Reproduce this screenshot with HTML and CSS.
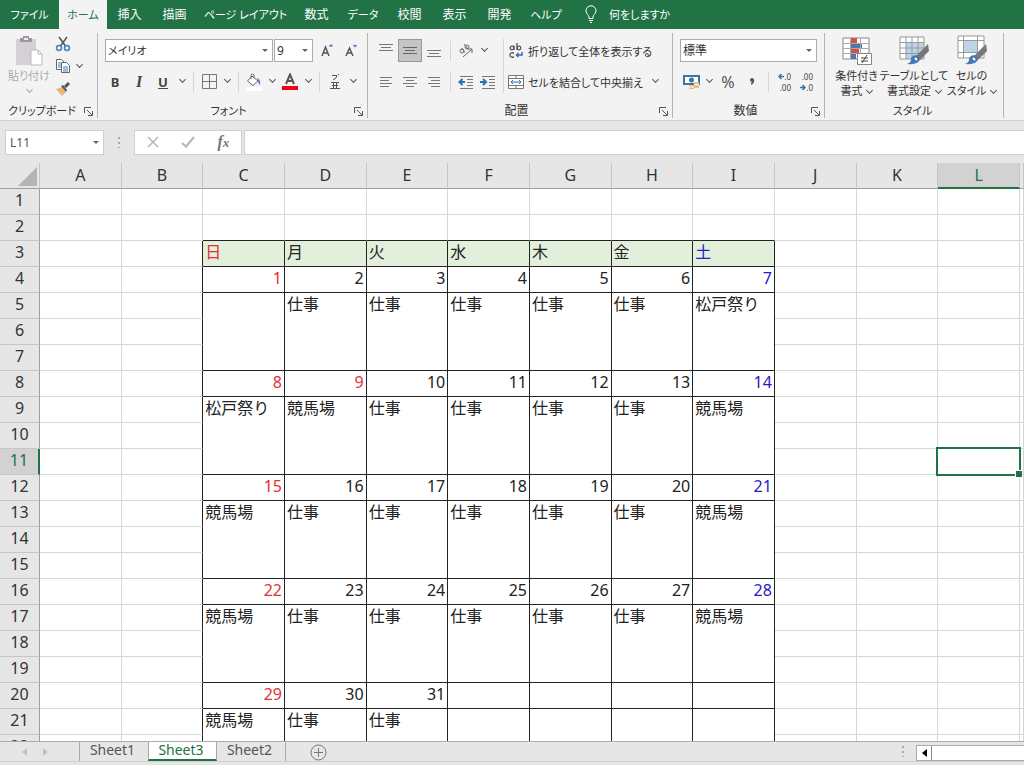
FILE: index.html
```html
<!DOCTYPE html>
<html lang="ja">
<head>
    <meta charset="UTF-8">
    <meta name="viewport" content="width=device-width, initial-scale=1.0">
    <title>Sheet3</title>
    <link rel="stylesheet" href="styles.css">
</head>
<body>

    <nav class="tabs">
        <button class="tab kana file-tab">ファイル</button>
        <button class="tab kana active">ホーム</button>
        <button class="tab">挿入</button>
        <button class="tab">描画</button>
        <button class="tab kana wide-tab">ページ レイアウト</button>
        <button class="tab">数式</button>
        <button class="tab kana kana-tab">データ</button>
        <button class="tab">校閲</button>
        <button class="tab">表示</button>
        <button class="tab">開発</button>
        <button class="tab kana kana-tab">ヘルプ</button>
        <button class="tell-me kana">
            <svg width="12" height="18" viewBox="0 0 12 18" fill="none" stroke="#fff"><path d="M4 13.500V12C4 10 1 9 1 5.800A5 5 0 0 1 11 5.800C11 9 8 10 8 12V13.500ZM4 15.500H8M5 17.500H7"/></svg>
            <span>何をしますか</span>
        </button>
    </nav>

    <div class="ribbon">
        <section class="group clipboard">
            <div class="group-body">
                <button class="big paste">
                    <svg width="28" height="32" viewBox="0 0 28 32"><path d="M1 4H21V30H1Z" fill="#d5d0d5"/><path d="M5 3H8V1H14V3H17V7H5Z" fill="#9b999b"/><path d="M9 3H13V5H9Z" fill="#eee"/><path d="M16 15H23L27 19V30H16Z" fill="#fff" stroke="#bbb"/><path d="M23 15V19H27" fill="none" stroke="#bbb"/></svg>
                    <span>貼り付け</span>
                    <i class="chev"></i>
                </button>
                <div class="clip-tools">
                    <button class="tool" aria-label="切り取り"><svg width="16" height="16" viewBox="0 0 16 16" fill="none" stroke-width="1.500"><path d="M4 1L10.500 10M12 1L5.500 10" stroke="#555"/><circle cx="4" cy="12" r="2.500" stroke="#4a7ebb"/><circle cx="12" cy="12" r="2.500" stroke="#4a7ebb"/></svg></button>
                    <div class="pair">
                        <button class="tool" aria-label="コピー"><svg width="16" height="16" viewBox="0 0 16 16" fill="#fff" stroke="#666"><path d="M1.500 1.500H6.500L9.500 4.500V11.500H1.500Z"/><path d="M6.500 4.500H11.500L14.500 7.500V14.500H6.500Z"/><path d="M3 5H6M3 7H6M3 9H6M8 9H13M8 11H13M8 13H13" stroke="#4a7ebb"/></svg></button>
                        <button class="drop" aria-label="コピーの種類"><i class="chev"></i></button>
                    </div>
                    <button class="tool" aria-label="書式のコピー"><svg width="16" height="16" viewBox="0 0 16 16"><path d="M1 8L7 6L11 11L7 15Z" fill="#e9b872"/><path d="M6 5L8 4L12 9L11 11Z" fill="#555"/><path d="M10 6L14 2" stroke="#555" stroke-width="3"/></svg></button>
                </div>
            </div>
            <div class="group-label"><span>クリップボード</span><button class="launcher" aria-label="クリップボードの設定"><svg width="9" height="9" viewBox="0 0 9 9" fill="none" stroke="#555"><path d="M.5 6V.5H7M3 3L8 8M8.500 4V8.500H4"/></svg></button></div>
        </section>

        <section class="group font">
            <div class="group-body rows">
                <div class="row">
                    <label class="combo font-name"><select aria-label="フォント"><option>メイリオ</option></select></label>
                    <label class="combo font-size"><select aria-label="サイズ"><option>9</option></select></label>
                    <button class="tool mid" aria-label="拡大"><svg width="14" height="16" viewBox="0 0 14 16" fill="none" stroke="#555" stroke-width="1.500"><path d="M2 13L5.500 4L9 13M3.500 10H7.500"/><path d="M9.500 3.500L11 2L12.500 3.500" stroke="#4a7ebb"/></svg></button>
                    <button class="tool mid" aria-label="縮小"><svg width="14" height="16" viewBox="0 0 14 16" fill="none" stroke="#555" stroke-width="1.500"><path d="M2 13L5.500 5L9 13M3.500 10H7.500"/><path d="M9.500 2L11 3.500L12.500 2" stroke="#4a7ebb"/></svg></button>
                </div>
                <div class="row">
                    <button class="tool mid"><b>B</b></button>
                    <button class="tool mid"><em>I</em></button>
                    <button class="tool mid"><u>U</u></button>
                    <button class="drop" aria-label="下線"><i class="chev"></i></button>
                    <i class="sep"></i>
                    <button class="tool" aria-label="罫線"><svg width="15" height="15" viewBox="0 0 15 15" fill="none" stroke="#777"><path d="M.5 .5H14.500V14.500H.5ZM7.500 0V15M0 7.500H15"/></svg></button>
                    <button class="drop" aria-label="罫線の種類"><i class="chev"></i></button>
                    <i class="sep"></i>
                    <button class="tool" aria-label="塗りつぶし"><svg width="16" height="18" viewBox="0 0 16 18" fill="none"><path d="M0 14H16V18H0Z" fill="#fff"/><path d="M6 3L12 8L7 12.500L1.500 8ZM5 6V2Q6.500 0 8 2V5" stroke="#666" fill="#fff"/><path d="M11 5Q15 6 14 12Q12 10 12 7Z" fill="#4a7ebb"/></svg></button>
                    <button class="drop" aria-label="塗りつぶしの色"><i class="chev"></i></button>
                    <button class="tool" aria-label="フォントの色"><svg width="16" height="18" viewBox="0 0 16 18" fill="none"><path d="M4 11L8 1.500L12 11M5.500 8H10.500" stroke="#555" stroke-width="2"/><path d="M0 13H16V17H0Z" fill="#f00012"/></svg></button>
                    <button class="drop" aria-label="色の一覧"><i class="chev"></i></button>
                    <i class="sep"></i>
                    <button class="tool" aria-label="ふりがな"><svg width="12" height="16" viewBox="0 0 12 16" fill="none" stroke="#555"><path d="M3 1.500H8Q8 4 4 6M9 0L10 1M2 8.500H10M4.500 8.500V14M7.500 8.500V14M3 11.500H9M1 14.500H11"/></svg></button>
                    <button class="drop" aria-label="ふりがなの設定"><i class="chev"></i></button>
                </div>
            </div>
            <div class="group-label"><span>フォント</span><button class="launcher" aria-label="フォントの設定"><svg width="9" height="9" viewBox="0 0 9 9" fill="none" stroke="#555"><path d="M.5 6V.5H7M3 3L8 8M8.500 4V8.500H4"/></svg></button></div>
        </section>

        <section class="group align">
            <div class="group-body">
                <div class="rows">
                    <div class="row">
                        <button class="tool mid" aria-label="上揃え"><svg width="14" height="16" viewBox="0 0 14 16" stroke="#777"><path d="M0 1.500H14M2 4.500H12M0 7.500H14"/></svg></button>
                        <button class="tool mid pressed" aria-label="上下中央揃え"><svg width="14" height="16" viewBox="0 0 14 16" stroke="#666"><path d="M0 4.500H14M2 7.500H12M0 10.500H14"/></svg></button>
                        <button class="tool mid" aria-label="下揃え"><svg width="14" height="16" viewBox="0 0 14 16" stroke="#777"><path d="M0 7.500H14M2 10.500H12M0 13.500H14"/></svg></button>
                        <i class="sep"></i>
                        <button class="tool" aria-label="方向"><svg width="16" height="16" viewBox="0 0 16 16" fill="none" stroke="#666"><circle cx="4" cy="8" r="2"/><path d="M3.500 5L7 9.500M6 1L10 6"/><circle cx="9" cy="4" r="2"/><path d="M5 14L14 6M14 10V6H10"/></svg></button>
                        <button class="drop" aria-label="方向の種類"><i class="chev"></i></button>
                    </div>
                    <div class="row">
                        <button class="tool mid" aria-label="左揃え"><svg width="12" height="12" viewBox="0 0 12 12" stroke="#777"><path d="M0 1.500H12M0 4.500H9M0 7.500H12M0 10.500H9"/></svg></button>
                        <button class="tool mid" aria-label="中央揃え"><svg width="14" height="12" viewBox="0 0 14 12" stroke="#777"><path d="M0 1.500H14M3 4.500H11M0 7.500H14M3 10.500H11"/></svg></button>
                        <button class="tool mid" aria-label="右揃え"><svg width="12" height="12" viewBox="0 0 12 12" stroke="#777"><path d="M0 1.500H12M3 4.500H12M0 7.500H12M3 10.500H12"/></svg></button>
                        <i class="sep"></i>
                        <button class="tool" aria-label="インデントを減らす"><svg width="16" height="14" viewBox="0 0 16 14" fill="none" stroke="#777"><path d="M2 1.500H15M9 4.500H15M9 7.500H15M9 10.500H15M2 13.500H15"/><path d="M1.500 7H7M4.500 4L1.500 7L4.500 10" stroke="#2f6fb3" stroke-width="2"/></svg></button>
                        <button class="tool" aria-label="インデントを増やす"><svg width="16" height="14" viewBox="0 0 16 14" fill="none" stroke="#777"><path d="M2 1.500H15M9 4.500H15M9 7.500H15M9 10.500H15M2 13.500H15"/><path d="M0 7H6M3 4L6 7L3 10" stroke="#2f6fb3" stroke-width="2"/></svg></button>
                    </div>
                </div>
                <i class="sep tall"></i>
                <div class="rows">
                    <button class="row text-tool">
                        <svg width="16" height="16" viewBox="0 0 16 16" fill="none" stroke="#555" stroke-width="1.300"><circle cx="4" cy="5" r="1.800"/><path d="M6 2.500V7M9 0V7"/><circle cx="11" cy="5" r="1.800"/><path d="M6 10Q2 9 2 12Q2 15 6 14"/><path d="M14 9V12H8M10.500 10L8.500 12L10.500 14" stroke="#2f6fb3" stroke-width="1.500"/></svg>
                        <span>折り返して全体を表示する</span>
                    </button>
                    <div class="row">
                        <button class="text-tool">
                            <svg width="16" height="16" viewBox="0 0 16 16" fill="#fff" stroke="#777"><path d="M.5 1.500H15.500V14.500H.5ZM8 1V5M8 11V15M0 4.500H16M0 11.500H16"/><path d="M3 8H13M5 6L3 8L5 10M11 6L13 8L11 10" stroke="#2f6fb3" fill="none"/></svg>
                            <span>セルを結合して中央揃え</span>
                        </button>
                        <button class="drop merge-drop" aria-label="結合の種類"><i class="chev"></i></button>
                    </div>
                </div>
            </div>
            <div class="group-label kanji"><span>配置</span><button class="launcher" aria-label="配置の設定"><svg width="9" height="9" viewBox="0 0 9 9" fill="none" stroke="#555"><path d="M.5 6V.5H7M3 3L8 8M8.500 4V8.500H4"/></svg></button></div>
        </section>

        <section class="group number">
            <div class="group-body rows">
                <div class="row">
                    <label class="combo"><select aria-label="表示形式"><option>標準</option></select></label>
                </div>
                <div class="row">
                    <button class="tool" aria-label="通貨"><svg width="17" height="16" viewBox="0 0 17 16"><path d="M1 2H16V10H1Z" fill="#fff" stroke="#3b73af" stroke-width="2"/><circle cx="8.500" cy="6" r="2.500" fill="#3b73af"/><path d="M6 11H11V15H6ZM11 8H16V14H11Z" fill="#f0bf7c"/><path d="M6 13H11M11 10.500H16" stroke="#fff"/></svg></button>
                    <button class="drop" aria-label="通貨の種類"><i class="chev"></i></button>
                    <button class="tool mid percent">%</button>
                    <button class="tool mid" aria-label="桁区切り"><svg width="8" height="12" viewBox="0 0 8 12"><circle cx="4" cy="4" r="2" fill="#555"/><path d="M5.500 4Q5.500 7 3 8" fill="none" stroke="#555" stroke-width="1.500"/></svg></button>
                    <i class="sep"></i>
                    <button class="tool decimal" aria-label="小数点以下を増やす"><span><svg width="6" height="7" viewBox="0 0 6 7" fill="none" stroke="#2f6fb3" stroke-width="1.500"><path d="M6 3.500H1M3.500 1L1 3.500L3.500 6"/></svg>.0</span><span>.00</span></button>
                    <button class="tool decimal" aria-label="小数点以下を減らす"><span>.00</span><span><svg width="6" height="7" viewBox="0 0 6 7" fill="none" stroke="#2f6fb3" stroke-width="1.500"><path d="M0 3.500H5M2.500 1L5 3.500L2.500 6"/></svg>.0</span></button>
                </div>
            </div>
            <div class="group-label kanji"><span>数値</span><button class="launcher" aria-label="数値の設定"><svg width="9" height="9" viewBox="0 0 9 9" fill="none" stroke="#555"><path d="M.5 6V.5H7M3 3L8 8M8.500 4V8.500H4"/></svg></button></div>
        </section>

        <section class="group styles">
            <div class="group-body">
                <button class="big">
                    <svg width="30" height="32" viewBox="0 0 30 32"><path d="M1 3H27V24H1Z" fill="#fff" stroke="#888"/><path d="M9 3H15V8H9ZM9 14H17V19H9Z" fill="#d0533a"/><path d="M9 8H20V14H9ZM9 19H14V24H9Z" fill="#4879ad"/><path d="M1 8.500H27M1 13.500H27M1 18.500H27M8.500 3V24M18.500 3V24" stroke="#aaa" fill="none"/><path d="M15.500 18.500H29.500V29.500H15.500Z" fill="#fff" stroke="#888"/><path d="M19 23H26M19 26H26M25 20L20 28" stroke="#444" fill="none"/></svg>
                    <span>条件付き</span>
                    <span>書式 <i class="chev"></i></span>
                </button>
                <button class="big table-style">
                    <svg width="30" height="32" viewBox="0 0 30 32"><path d="M1 2H25V24H1Z" fill="#fff"/><path d="M7 7H25V24H7Z" fill="#bcd3ea"/><path d="M1 2H25V24H1ZM1 7.500H25M1 13H25M1 18.500H25M7 2V24M13 2V24M19 2V24" stroke="#999" fill="none"/><path d="M29 9L30 16L21 25L17 21Z" fill="#777"/><path d="M17 20L21 24Q20 30 8 29Q13 27 12 23Q14 20 17 20Z" fill="#3f7ab5"/><path d="M16 23L18 25" stroke="#fff" stroke-width="2"/></svg>
                    <span>テーブルとして</span>
                    <span>書式設定 <i class="chev"></i></span>
                </button>
                <button class="big">
                    <svg width="30" height="32" viewBox="0 0 30 32"><path d="M1 1H27V23H1Z" fill="#fff"/><path d="M7 6H20V18H7Z" fill="#bcd3ea"/><path d="M1 1H27V23H1ZM1 5.500H27M1 17.500H27M6.500 1V23M20.500 1V23" stroke="#999" fill="none"/><path d="M29 9L30 16L21 25L17 21Z" fill="#777"/><path d="M17 20L21 24Q20 30 8 29Q13 27 12 23Q14 20 17 20Z" fill="#3f7ab5"/><path d="M16 23L18 25" stroke="#fff" stroke-width="2"/></svg>
                    <span>セルの</span>
                    <span>スタイル <i class="chev"></i></span>
                </button>
            </div>
            <div class="group-label"><span>スタイル</span></div>
        </section>

        <section class="group cells">
            <div class="group-body">
                <button class="big">
                    <svg width="30" height="32" viewBox="0 0 30 32" fill="#fff" stroke="#888"><path d="M5.500 1.500H28V7.500H5.500ZM5.500 21.500H28V27.500H5.500Z"/><path d="M14 13H4M9 8L4 13L9 18" fill="none" stroke="#2f6fb3" stroke-width="3"/></svg>
                    <span>挿入</span>
                </button>
            </div>
        </section>
    </div>

    <div class="formula-bar">
        <label class="combo name-box"><input type="text" value="L11" aria-label="名前ボックス"></label>
        <i class="dots"></i>
        <div class="fx-buttons">
            <button aria-label="キャンセル"><svg width="12" height="12" viewBox="0 0 12 12" stroke="#b5b5b5" stroke-width="1.500"><path d="M1 1L11 11M11 1L1 11"/></svg></button>
            <button aria-label="入力"><svg width="14" height="12" viewBox="0 0 14 12" fill="none" stroke="#b5b5b5" stroke-width="2"><path d="M1 7L5 10.500L13 1"/></svg></button>
            <button class="fx"><em>f<small>x</small></em></button>
        </div>
        <input class="formula" type="text" aria-label="数式">
    </div>

    <main class="sheet">
        <table id="grid"></table>
    </main>

    <footer class="sheet-bar">
        <div class="sheet-nav">
            <button aria-label="前のシート"><svg width="5" height="8" viewBox="0 0 5 8"><path d="M5 0V8L0 4Z" fill="#c3c3c3"/></svg></button>
            <button aria-label="次のシート"><svg width="5" height="8" viewBox="0 0 5 8"><path d="M0 0V8L5 4Z" fill="#c3c3c3"/></svg></button>
        </div>
        <button class="sheet-tab">Sheet1</button>
        <button class="sheet-tab current">Sheet3</button>
        <button class="sheet-tab">Sheet2</button>
        <button class="add-sheet" aria-label="新しいシート"><svg width="17" height="17" viewBox="0 0 17 17" fill="none" stroke="#777"><circle cx="8.500" cy="8.500" r="7.500"/><path d="M8.500 4V13M4 8.500H13"/></svg></button>
        <i class="dots"></i>
        <div class="scrollbar">
            <button aria-label="左へ"><svg width="5" height="8" viewBox="0 0 5 8"><path d="M5 0V8L0 4Z" fill="#000"/></svg></button>
        </div>
    </footer>

    <script src="grid.js"></script>
</body>
</html>
```
FILE: styles.css
```css
* {
    box-sizing: border-box;
}
body {
    margin: 0;
    height: 100vh;
    display: flex;
    flex-direction: column;
    overflow: hidden;
    background: #e6e6e6;
    color: #333;
    font-family: "Noto Sans", "Noto Sans CJK JP", sans-serif;
    font-size: 12px;
    font-feature-settings: "palt";
}
button, input, select {
    font: inherit;
    font-feature-settings: inherit;
    color: inherit;
    background: none;
    border: none;
    border-radius: 0;
    padding: 0;
    margin: 0;
    outline: none;
}
svg {
    display: block;
    flex: none;
}

/* tabs */
.tabs {
    display: flex;
    height: 29px;
    flex: none;
    background: #217346;
    color: #fff;
}
.tab {
    width: 45px;
    padding-bottom: 2px;
    white-space: nowrap;
}
.kana {
    font-size: 11px;
}
.tab.active {
    width: 48px;
    background: #f3f3f3;
    color: #217346;
}
.file-tab {
    width: 59px;
}
.wide-tab {
    width: 97px;
}
.kana-tab {
    width: 48px;
}
.tell-me {
    display: flex;
    align-items: center;
    gap: 12px;
    margin-left: 15px;
    padding-bottom: 2px;
}

/* ribbon */
.ribbon {
    display: flex;
    height: 92px;
    flex: none;
    overflow: hidden;
    background: #f3f3f3;
    border-bottom: 1px solid #d2d2d2;
    padding: 4px 0 2px;
    font-size: 11px;
}
.group {
    display: flex;
    flex-direction: column;
    flex: none;
    border-right: 1px solid #b5b5b5;
}
.group-body {
    flex: 1;
    display: flex;
}
.group-label {
    display: flex;
    align-items: center;
    height: 14px;
    line-height: 14px;
    padding-right: 3px;
}
.group-label span {
    flex: 1;
    text-align: center;
    white-space: nowrap;
}
.kanji {
    font-size: 12px;
}
.launcher {
    width: 10px;
}
.clipboard {
    width: 98px;
}
.font {
    width: 270px;
    padding-left: 5px;
}
.align {
    width: 305px;
    padding-left: 6px;
}
.number {
    width: 152px;
    padding-left: 7px;
}
.styles {
    width: 179px;
}
.cells {
    border: none;
    padding-left: 10px;
}
.rows {
    display: flex;
    flex-direction: column;
    gap: 8px;
    padding-top: 6px;
}
.row {
    display: flex;
    align-items: center;
    height: 23px;
}
.tool {
    display: flex;
    align-items: center;
    justify-content: center;
    width: 22px;
    height: 23px;
    color: #444;
    font-size: 13px;
}
.tool.mid {
    width: 24px;
}
.tool em {
    font-family: "Liberation Serif", serif;
    font-weight: bold;
    font-size: 16px;
}
.tool u {
    font-weight: bold;
}
.tool.percent {
    font-size: 16px;
    color: #555;
}
.pressed {
    background: #c5c5c5;
    border: 1px solid #999;
}
.drop {
    width: 14px;
    height: 23px;
    display: flex;
    align-items: center;
    justify-content: center;
}
.chev {
    display: inline-block;
    width: 5px;
    height: 5px;
    border: solid #555;
    border-width: 0 1px 1px 0;
    transform: translateY(-2px) rotate(45deg);
}
.sep {
    width: 1px;
    height: 20px;
    margin: 0 4px;
    background: #d5d5d5;
}
.sep.tall {
    height: 54px;
    margin-top: 6px;
}
.combo {
    display: flex;
    align-items: center;
    height: 23px;
    background: #fff;
    border: 1px solid #ababab;
    padding-right: 4px;
}
.combo::after {
    content: "";
    border: solid transparent;
    border-width: 3px 3px 0;
    border-top-color: #666;
}
.combo select, .combo input {
    appearance: none;
    flex: 1;
    min-width: 0;
    padding-left: 2px;
}
.font .row:first-child {
    padding-left: 2px;
}
.font-name {
    width: 168px;
    margin-right: 1px;
}
.font-size {
    width: 39px;
    margin-right: 2px;
    font-size: 12px;
}
.number .combo {
    width: 137px;
    font-size: 12px;
}
.tool.decimal {
    flex-direction: column;
    font-size: 8px;
    line-height: 11px;
    align-items: flex-end;
    padding-right: 4px;
}
.decimal span {
    display: flex;
    align-items: center;
}
.text-tool {
    display: flex;
    align-items: center;
    gap: 4px;
    white-space: nowrap;
}
.merge-drop {
    margin-left: 6px;
}
.big {
    display: flex;
    flex-direction: column;
    align-items: center;
    justify-content: flex-start;
    width: 53px;
    padding-top: 2px;
    line-height: 15px;
    white-space: nowrap;
}
.big svg {
    margin-bottom: 1px;
}
.big span .chev {
    margin-left: 2px;
}
.styles .group-body {
    padding-left: 5px;
}
.table-style {
    width: 62px;
}
.paste {
    width: 50px;
    margin-left: 4px;
    color: #aaa;
}
.paste .chev {
    border-color: #aaa;
    margin-top: 6px;
}
.clip-tools .tool {
    width: 18px;
    height: 22px;
}
.pair {
    display: flex;
}

/* formula bar */
.formula-bar {
    display: flex;
    align-items: center;
    flex: none;
    height: 42px;
    padding-left: 5px;
}
.name-box {
    width: 99px;
    height: 25px;
    border-color: #cfcfcf;
    color: #555;
    padding-left: 2px;
}
.dots {
    width: 2px;
    height: 11px;
    margin: 0 14px;
    background: repeating-linear-gradient(#aaa 0 2px, transparent 2px 5px);
}
.fx-buttons {
    display: flex;
    width: 108px;
    height: 25px;
    background: #fff;
    border: 1px solid #cfcfcf;
    margin-right: 2px;
}
.fx-buttons button {
    flex: 1;
    display: flex;
    align-items: center;
    justify-content: center;
}
.fx em {
    font: italic bold 16px/20px "Liberation Serif", serif;
    color: #777;
}
.fx small {
    font-size: 13px;
}
.formula {
    flex: 1;
    height: 25px;
    background: #fff;
    border: 1px solid #cfcfcf;
    border-right: none;
}

/* grid */
.sheet {
    flex: 1;
    min-height: 0;
    overflow: hidden;
}
#grid {
    width: 100%;
    table-layout: fixed;
    border-collapse: separate;
    border-spacing: 0;
    font-size: 16px;
    line-height: 22px;
    font-feature-settings: normal;
    color: #222;
}
#grid .row-col {
    width: 40px;
}
#grid .edge-col {
    width: 4px;
}
#grid tr {
    height: 26px;
}
#grid th {
    padding: 0;
    font-weight: normal;
    vertical-align: top;
    color: #333;
    background: #e6e6e6;
    border: solid #c6c6c6;
    border-width: 0 1px 1px 0;
}
#grid thead th {
    padding-top: 1px;
    border-bottom-color: #9e9e9e;
}
#grid tbody th {
    border-right-color: #9e9e9e;
}
#grid thead th.selected {
    background: #d2d2d2;
    color: #217346;
    border-bottom: 2px solid #217346;
}
#grid tbody th.selected {
    background: #d2d2d2;
    color: #217346;
    border-right: 2px solid #217346;
}
#grid .corner svg {
    margin: 3px 2px 0 auto;
}
#grid td {
    padding: 0 2px;
    background: #fff;
    border: solid #d6d6d6;
    border-width: 0 1px 1px 0;
    vertical-align: top;
    white-space: nowrap;
}
#grid td.cal {
    border-color: #222;
}
#grid td.line-right {
    border-right-color: #222;
}
#grid td.line-bottom {
    border-bottom-color: #222;
}
#grid td.head {
    background: #e2efda;
}
#grid td.day {
    text-align: right;
}
#grid td.red {
    color: #e03038;
}
#grid td.blue {
    color: #2420c8;
}
#grid td.active-cell {
    position: relative;
}
.active-cell::before {
    content: "";
    position: absolute;
    inset: -2px;
    border: 2px solid #217346;
}
.active-cell::after {
    content: "";
    position: absolute;
    right: -3px;
    bottom: -3px;
    width: 6px;
    height: 6px;
    background: #217346;
    border: solid #fff;
    border-width: 1px 0 0 1px;
}

/* sheet tabs */
.sheet-bar {
    display: flex;
    flex: none;
    height: 24px;
    border-top: 1px solid #ababab;
    box-shadow: inset 0 -3px #e6e6e6, inset 0 -4px #cfcfcf;
    padding-bottom: 4px;
    font-size: 14px;
    color: #555;
}
.sheet-nav {
    display: flex;
    align-items: center;
    gap: 16px;
    width: 79px;
    padding-left: 22px;
}
.sheet-tab {
    width: 69px;
    line-height: 16px;
    border-left: 1px solid #ababab;
    padding: 0 3px 4px 0;
}
.sheet-tab.current {
    background: #fff;
    color: #217346;
    border-bottom: 2px solid #217346;
    border-right: 1px solid #ababab;
    padding-bottom: 2px;
}
.sheet-tab.current + .sheet-tab {
    border-left: none;
    border-right: 1px solid #ababab;
}
.add-sheet {
    margin: 2px auto 0 24px;
}
.sheet-bar .dots {
    align-self: center;
    margin: 0 12px;
}
.scrollbar {
    width: 108px;
    height: 16px;
    margin-top: 3px;
    background: #fff;
    border: 1px solid #ababab;
    border-right: none;
}
.scrollbar button {
    display: flex;
    align-items: center;
    justify-content: center;
    width: 15px;
    height: 14px;
    border-right: 1px solid #888;
}
```
FILE: grid.js
```js
const columns = ['A', 'B', 'C', 'D', 'E', 'F', 'G', 'H', 'I', 'J', 'K', 'L', ''];
const firstCol = 2;
const lastCol = 8;
const rowCount = 22;

// row number -> values for columns C to I
const headRow = ['日', '月', '火', '水', '木', '金', '土'];
const days = {
    4: [1, 2, 3, 4, 5, 6, 7],
    8: [8, 9, 10, 11, 12, 13, 14],
    12: [15, 16, 17, 18, 19, 20, 21],
    16: [22, 23, 24, 25, 26, 27, 28],
    20: [29, 30, 31, '', '', '', '']
};
const plans = {
    5: ['', '仕事', '仕事', '仕事', '仕事', '仕事', '松戸祭り'],
    9: ['松戸祭り', '競馬場', '仕事', '仕事', '仕事', '仕事', '競馬場'],
    13: ['競馬場', '仕事', '仕事', '仕事', '仕事', '仕事', '競馬場'],
    17: ['競馬場', '仕事', '仕事', '仕事', '仕事', '仕事', '競馬場'],
    21: ['競馬場', '仕事', '仕事', '', '', '', '']
};
const holidays = [9];

function dayColor(index, value) {
    if (index === 0 || holidays.includes(value)) return ' red';
    if (index === 6) return ' blue';
    return '';
}

function calendarCell(row, index) {
    if (row === 3) {
        return `<td class="cal head${dayColor(index)}">${headRow[index]}</td>`;
    }
    if (days[row]) {
        const value = days[row][index];
        return `<td class="cal day${dayColor(index, value)}">${value}</td>`;
    }
    if (plans[row]) {
        return `<td class="cal" rowspan="3">${plans[row][index]}</td>`;
    }
    return ''; // covered by the rowspan above
}

let html = '<thead><tr><th class="row-col corner"><svg width="19" height="19" viewBox="0 0 19 19"><path d="M19 0V19H0Z" fill="#b4b4b4"/></svg></th>';
columns.forEach(name => {
    const cls = name === 'L' ? 'selected' : name === '' ? 'edge-col' : '';
    html += `<th class="${cls}">${name}</th>`;
});
html += '</tr></thead><tbody>';

for (let row = 1; row <= rowCount; row++) {
    html += `<tr><th class="${row === 11 ? 'selected' : ''}">${row}</th>`;
    columns.forEach((name, col) => {
        if (row > 2 && col >= firstCol && col <= lastCol) {
            html += calendarCell(row, col - firstCol);
            return;
        }
        let cls = '';
        if (row === 2 && col >= firstCol && col <= lastCol) cls = 'line-bottom';
        if (row > 2 && col === firstCol - 1) cls = 'line-right';
        if (row === 11 && name === 'L') cls = 'active-cell';
        html += `<td class="${cls}"></td>`;
    });
    html += '</tr>';
}

document.getElementById('grid').innerHTML = html + '</tbody>';
```
